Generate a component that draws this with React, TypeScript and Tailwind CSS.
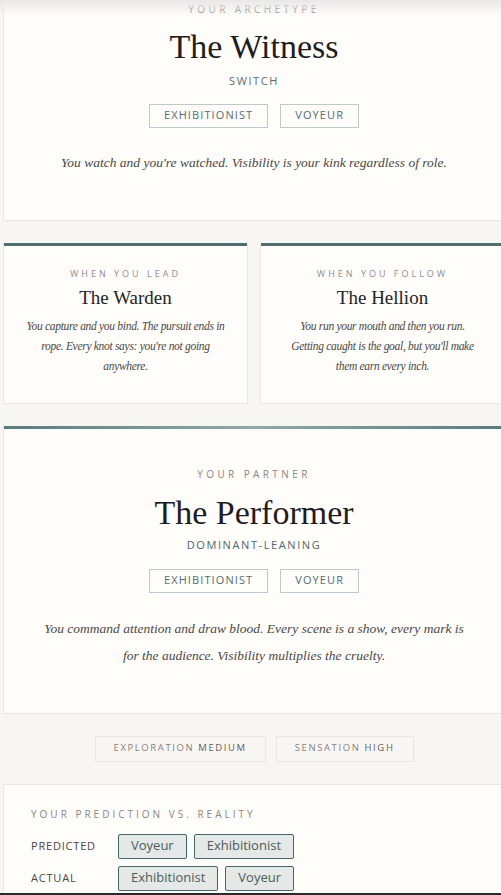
import React from "react";

const serif = "font-['Liberation_Serif','DejaVu_Serif',serif]";
const sans = "font-['Open_Sans','Noto_Sans',sans-serif]";

function Tags({ items, className = "mt-[15px]" }: { items: string[]; className?: string }) {
  return (
    <div className={`${className} flex justify-center gap-[12px]`}>
      {items.map((t) => (
        <span
          key={t}
          className={`${sans} flex h-[24px] items-center border border-[#bccbca] px-[14px] text-[11px] tracking-[1.1px] text-[#566d75]`}
        >
          {t}
        </span>
      ))}
    </div>
  );
}

function SideCard({ label, title, text, pad }: { label: string; title: string; text: string; pad: string }) {
  return (
    <div className="flex-1 border border-t-0 border-[#ebe6e1] bg-[#fefdfa]">
      <div className="h-[3px] bg-[#4d6f6d]" />
      <div className={`${pad} pt-[21px] pb-[27px] text-center`}>
        <p className={`${sans} text-[9px] tracking-[3px] text-[#958a92]`}>{label}</p>
        <h3 className={`${serif} mt-[6px] text-[19px] leading-[24px] text-[#262424]`}>{title}</h3>
        <p className={`${serif} mt-[6px] text-[11.5px] leading-[20px] tracking-[-0.3px] text-[#4b4744] italic`}>{text}</p>
      </div>
    </div>
  );
}

export default function App() {
  return (
    <div className="relative h-[895px] w-[501px] overflow-hidden bg-[#f8f6f2]">
      <div className="pointer-events-none absolute inset-x-0 top-0 z-10 h-[16px] bg-gradient-to-b from-[#e9e8e6] to-transparent" />
      <div className="ml-[3px] w-[502px]">
        {/* archetype */}
        <div className="-mt-[20px] border border-t-0 border-[#ebe6e1] bg-[#fefdfa] pt-[22px] pb-[47px] text-center">
          <p className={`${sans} text-[10px] tracking-[3.4px] text-[#8c8681]`}>YOUR ARCHETYPE</p>
          <h1 className={`${serif} mt-[10px] text-[34px] leading-[40px] text-[#1f1d1d]`}>The Witness</h1>
          <p className={`${sans} mt-[6px] text-[11px] tracking-[1.6px] text-[#5a6d74]`}>SWITCH</p>
          <Tags items={["EXHIBITIONIST", "VOYEUR"]} className="mt-[14px]" />
          <p className={`${serif} mt-[25px] text-[13.5px] leading-[20px] text-[#4b4744] italic`}>
            You watch and you're watched. Visibility is your kink regardless of role.
          </p>
        </div>

        {/* lead / follow */}
        <div className="mt-[22px] flex gap-[12px]">
          <SideCard
            pad="px-[20px]"
            label="WHEN YOU LEAD"
            title="The Warden"
            text="You capture and you bind. The pursuit ends in rope. Every knot says: you're not going anywhere."
          />
          <SideCard
            pad="px-[26px]"
            label="WHEN YOU FOLLOW"
            title="The Hellion"
            text="You run your mouth and then you run. Getting caught is the goal, but you'll make them earn every inch."
          />
        </div>

        {/* partner */}
        <div className="mt-[22px] border border-t-0 border-[#ebe6e1] bg-[#fefdfa]">
          <div className="h-[3px] bg-gradient-to-r from-[#567f7c] via-[#8eaaa6] to-[#567f7c]" />
          <div className="px-[38px] pt-[38px] pb-[44px] text-center">
            <p className={`${sans} text-[10px] tracking-[3.4px] text-[#8c8681]`}>YOUR PARTNER</p>
            <h2 className={`${serif} mt-[11px] text-[34px] leading-[40px] text-[#1f1d1d]`}>The Performer</h2>
            <p className={`${sans} mt-[4px] text-[11px] tracking-[1.6px] text-[#4f666e]`}>DOMINANT-LEANING</p>
            <Tags items={["EXHIBITIONIST", "VOYEUR"]} className="mt-[15px]" />
            <p className={`${serif} mt-[22px] text-[13.5px] leading-[27px] text-[#4b4744] italic`}>
              You command attention and draw blood. Every scene is a show, every mark is for the audience. Visibility multiplies the cruelty.
            </p>
          </div>
        </div>

        {/* levels */}
        <div className="mt-[22px] flex justify-center gap-[10px]">
          <span className={`${sans} flex h-[26px] items-center border border-[#ebe6e1] bg-[#f9f7f4] px-[18px] text-[9.5px] tracking-[1.6px] text-[#8a817c]`}>
            EXPLORATION&nbsp;<span className="font-medium text-[#665c58]">MEDIUM</span>
          </span>
          <span className={`${sans} flex h-[26px] items-center border border-[#ebe6e1] bg-[#f9f7f4] px-[18px] text-[9.5px] tracking-[1.6px] text-[#8a817c]`}>
            SENSATION&nbsp;<span className="font-medium text-[#665c58]">HIGH</span>
          </span>
        </div>

        {/* prediction */}
        <div className="mt-[22px] border border-[#ebe6e1] bg-[#fefdfa] px-[27px] pt-[22px] pb-[20px]">
          <p className={`${sans} text-[10px] tracking-[3px] text-[#8c8681]`}>YOUR PREDICTION VS. REALITY</p>
          <div className="mt-[12px] flex flex-col gap-[7px]">
            {[
              ["PREDICTED", ["Voyeur", "Exhibitionist"]],
              ["ACTUAL", ["Exhibitionist", "Voyeur"]],
            ].map(([label, chips]) => (
              <div key={label as string} className="flex items-center">
                <span className={`${sans} w-[87px] text-[11px] tracking-[0.8px] text-[#4a4644]`}>{label}</span>
                <div className="flex gap-[7px]">
                  {(chips as string[]).map((c) => (
                    <span
                      key={c}
                      className={`${sans} flex h-[25px] items-center rounded-[2px] border border-[#3f6a69] bg-[#e4e8e6] px-[12px] text-[13px] text-[#4e5c5c]`}
                    >
                      {c}
                    </span>
                  ))}
                </div>
              </div>
            ))}
          </div>
        </div>
      </div>
      <div className="absolute inset-x-0 bottom-0 h-[2px] bg-[#2a2a2a]" />
    </div>
  );
}
